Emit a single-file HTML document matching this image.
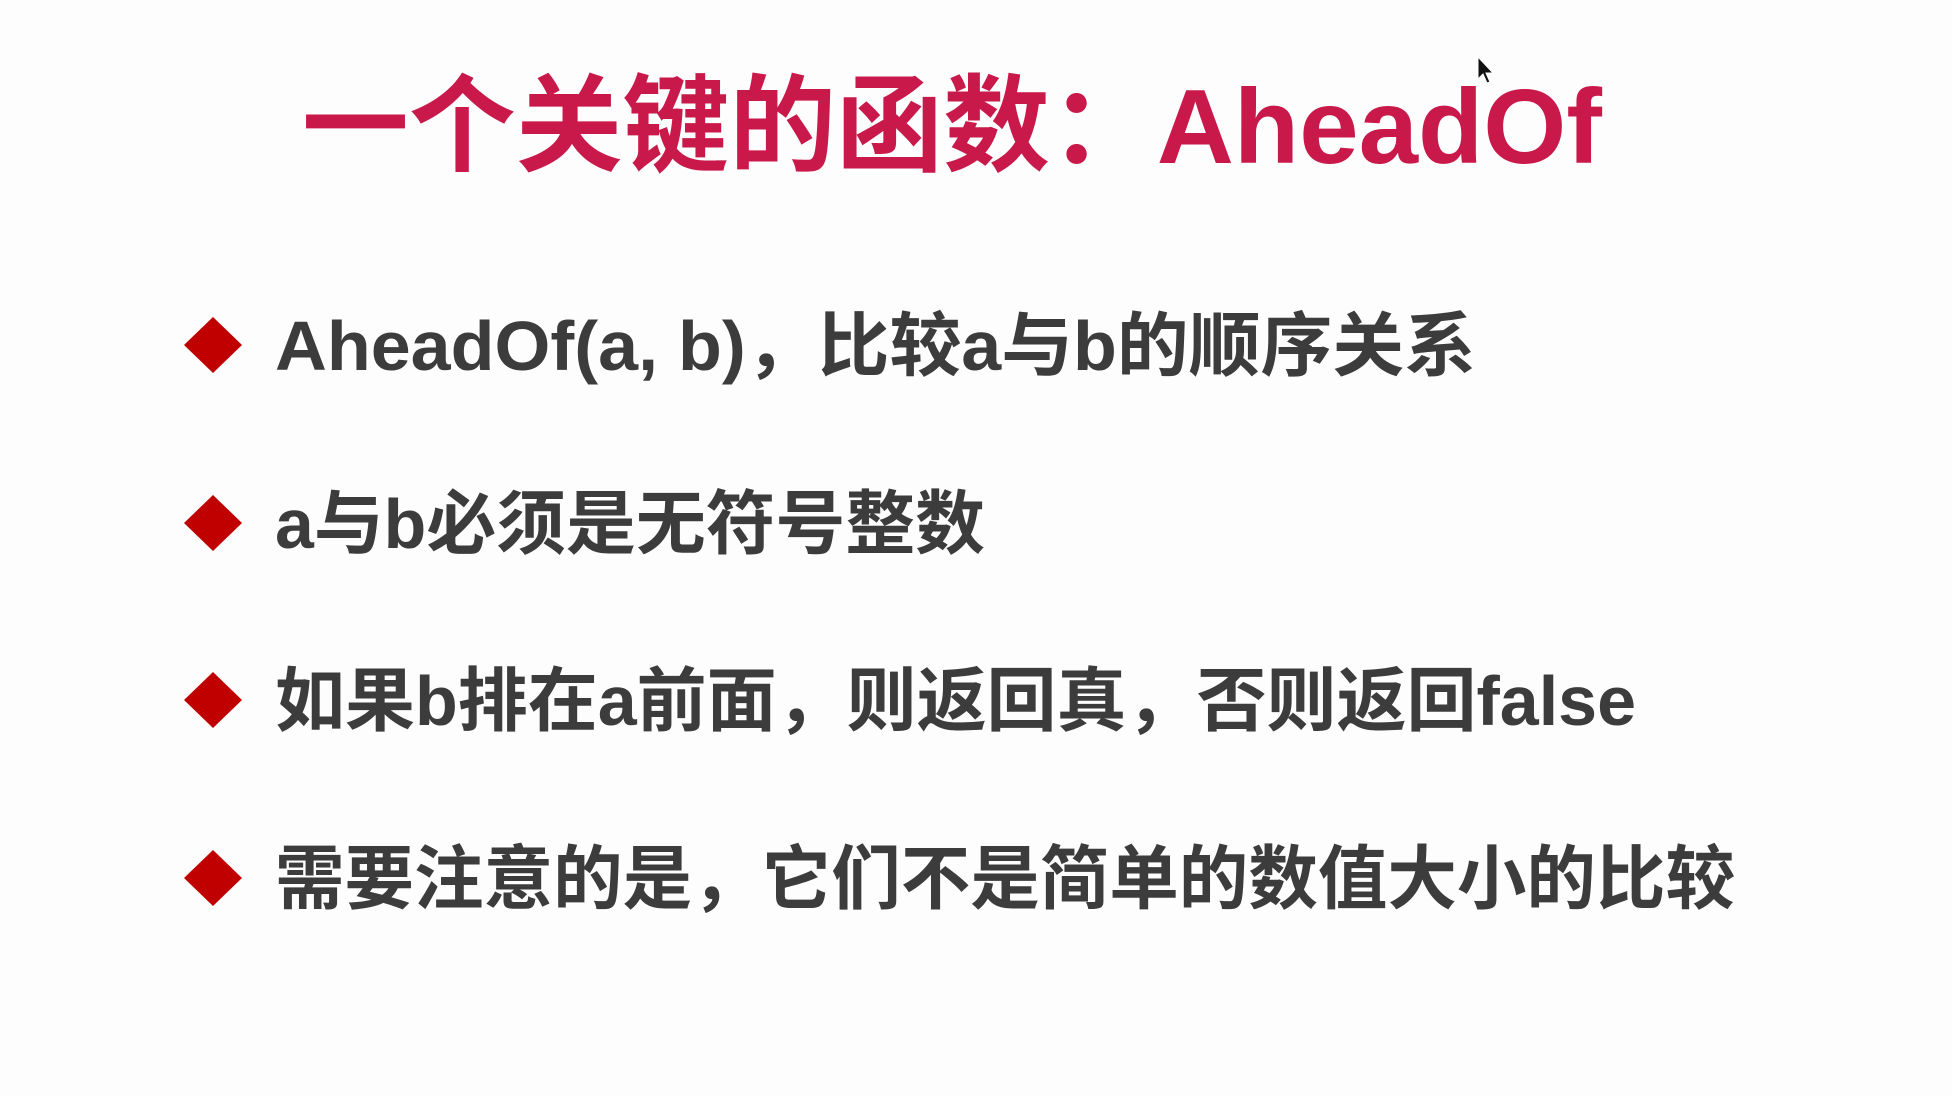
<!DOCTYPE html>
<html><head><meta charset="utf-8"><style>
html,body{margin:0;padding:0;background:#fdfdfd;width:1952px;height:1096px;overflow:hidden}
svg{display:block}
text{font-family:"Liberation Sans","Noto Sans CJK SC",sans-serif;font-weight:bold}
</style></head><body>
<svg width="1952" height="1096" viewBox="0 0 1952 1096">
<rect width="1952" height="1096" fill="#fdfdfd"/>
<text x="302" y="163" font-size="106" fill="#c8194a" textLength="1300" lengthAdjust="spacingAndGlyphs">一个关键的函数：AheadOf</text>
<path d="M1478,57 L1478,79 L1483,74 L1487,83 L1490,82 L1486,73 L1493,73 Z" fill="#111" stroke="#fff" stroke-width="1"/>
<g fill="#c00000">
<polygon points="213,317 242,345 213,373 184,345"/>
<polygon points="213,495 242,523 213,551 184,523"/>
<polygon points="213,672 242,700 213,728 184,700"/>
<polygon points="213,850 242,878 213,906 184,878"/>
</g>
<g fill="#3c3c3c" font-size="70">
<text x="275" y="370" textLength="1201" lengthAdjust="spacingAndGlyphs">AheadOf(a, b)，比较a与b的顺序关系</text>
<text x="275" y="548" textLength="710" lengthAdjust="spacingAndGlyphs">a与b必须是无符号整数</text>
<text x="275" y="725" textLength="1361" lengthAdjust="spacingAndGlyphs">如果b排在a前面，则返回真，否则返回false</text>
<text x="275" y="903" textLength="1460" lengthAdjust="spacingAndGlyphs">需要注意的是，它们不是简单的数值大小的比较</text>
</g>
</svg>
</body></html>
